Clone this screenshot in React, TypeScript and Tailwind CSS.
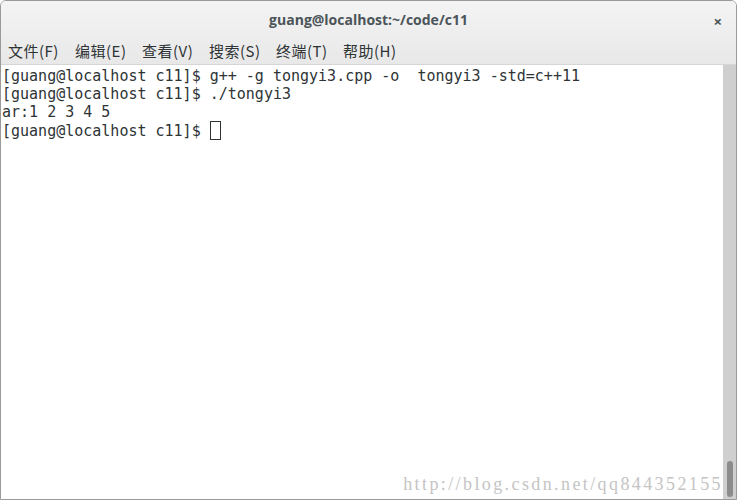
export default function App() {
  const menus = ["文件(F)", "编辑(E)", "查看(V)", "搜索(S)", "终端(T)", "帮助(H)"];
  const lines = [
    "[guang@localhost c11]$ g++ -g tongyi3.cpp -o  tongyi3 -std=c++11",
    "[guang@localhost c11]$ ./tongyi3",
    "ar:1 2 3 4 5",
  ];

  return (
    <div className="w-[737px] h-[500px] bg-white overflow-hidden">
      <div className="w-full h-full flex flex-col border border-[#9a9a9a] rounded-tl-[6px] rounded-tr-[6px] overflow-hidden">
        {/* 标题栏 + 菜单 */}
        <div className="bg-gradient-to-b from-[#f4f4f4] to-[#e8e8e8] border-b border-[#d6d6d6]">
          <div className="h-[37px] flex items-center justify-center relative">
            <span
              className="text-[14px] font-bold text-[#4b5459]"
              style={{ fontFamily: '"Open Sans", "Noto Sans", sans-serif' }}
            >
              guang@localhost:~/code/c11
            </span>
            <span className="absolute right-[14px] top-[9px] text-[15px] font-bold text-[#4b5459]">×</span>
          </div>
          <div
            className="h-[26px] flex items-center pl-[7px] text-[15px] text-[#2e3436]"
            style={{ fontFamily: '"Noto Sans CJK SC", "Noto Sans", sans-serif' }}
          >
            {menus.map((m) => (
              <span key={m} className="w-[67px] tracking-[0.5px]">{m}</span>
            ))}
          </div>
        </div>

        {/* 终端 */}
        <div className="flex-1 flex min-h-0">
          <div
            className="flex-1 relative pt-[2px] pl-[1px] text-[15px] leading-[18px] text-[#2e3436] whitespace-pre"
            style={{ fontFamily: '"DejaVu Sans Mono", "Liberation Mono", monospace' }}
          >
            {lines.map((l, i) => (
              <div key={i}>{l}</div>
            ))}
            <div className="flex items-center">
              <span>{"[guang@localhost c11]$ "}</span>
              <span className="inline-block w-[11px] h-[19px] border border-[#2e3436]"></span>
            </div>
            <span
              className="absolute right-[0px] bottom-[6px] text-[18px] tracking-[2.4px] text-[#c4c4c4]"
              style={{ fontFamily: '"Liberation Serif", "DejaVu Serif", serif' }}
            >
              http://blog.csdn.net/qq844352155
            </span>
          </div>
          <div className="w-[13px] bg-[#cfcfcf] flex flex-col justify-end items-center pb-[2px]">
            <div className="w-[6px] h-[36px] rounded-full bg-[#8c8c8c]"></div>
          </div>
        </div>
      </div>
    </div>
  );
}
